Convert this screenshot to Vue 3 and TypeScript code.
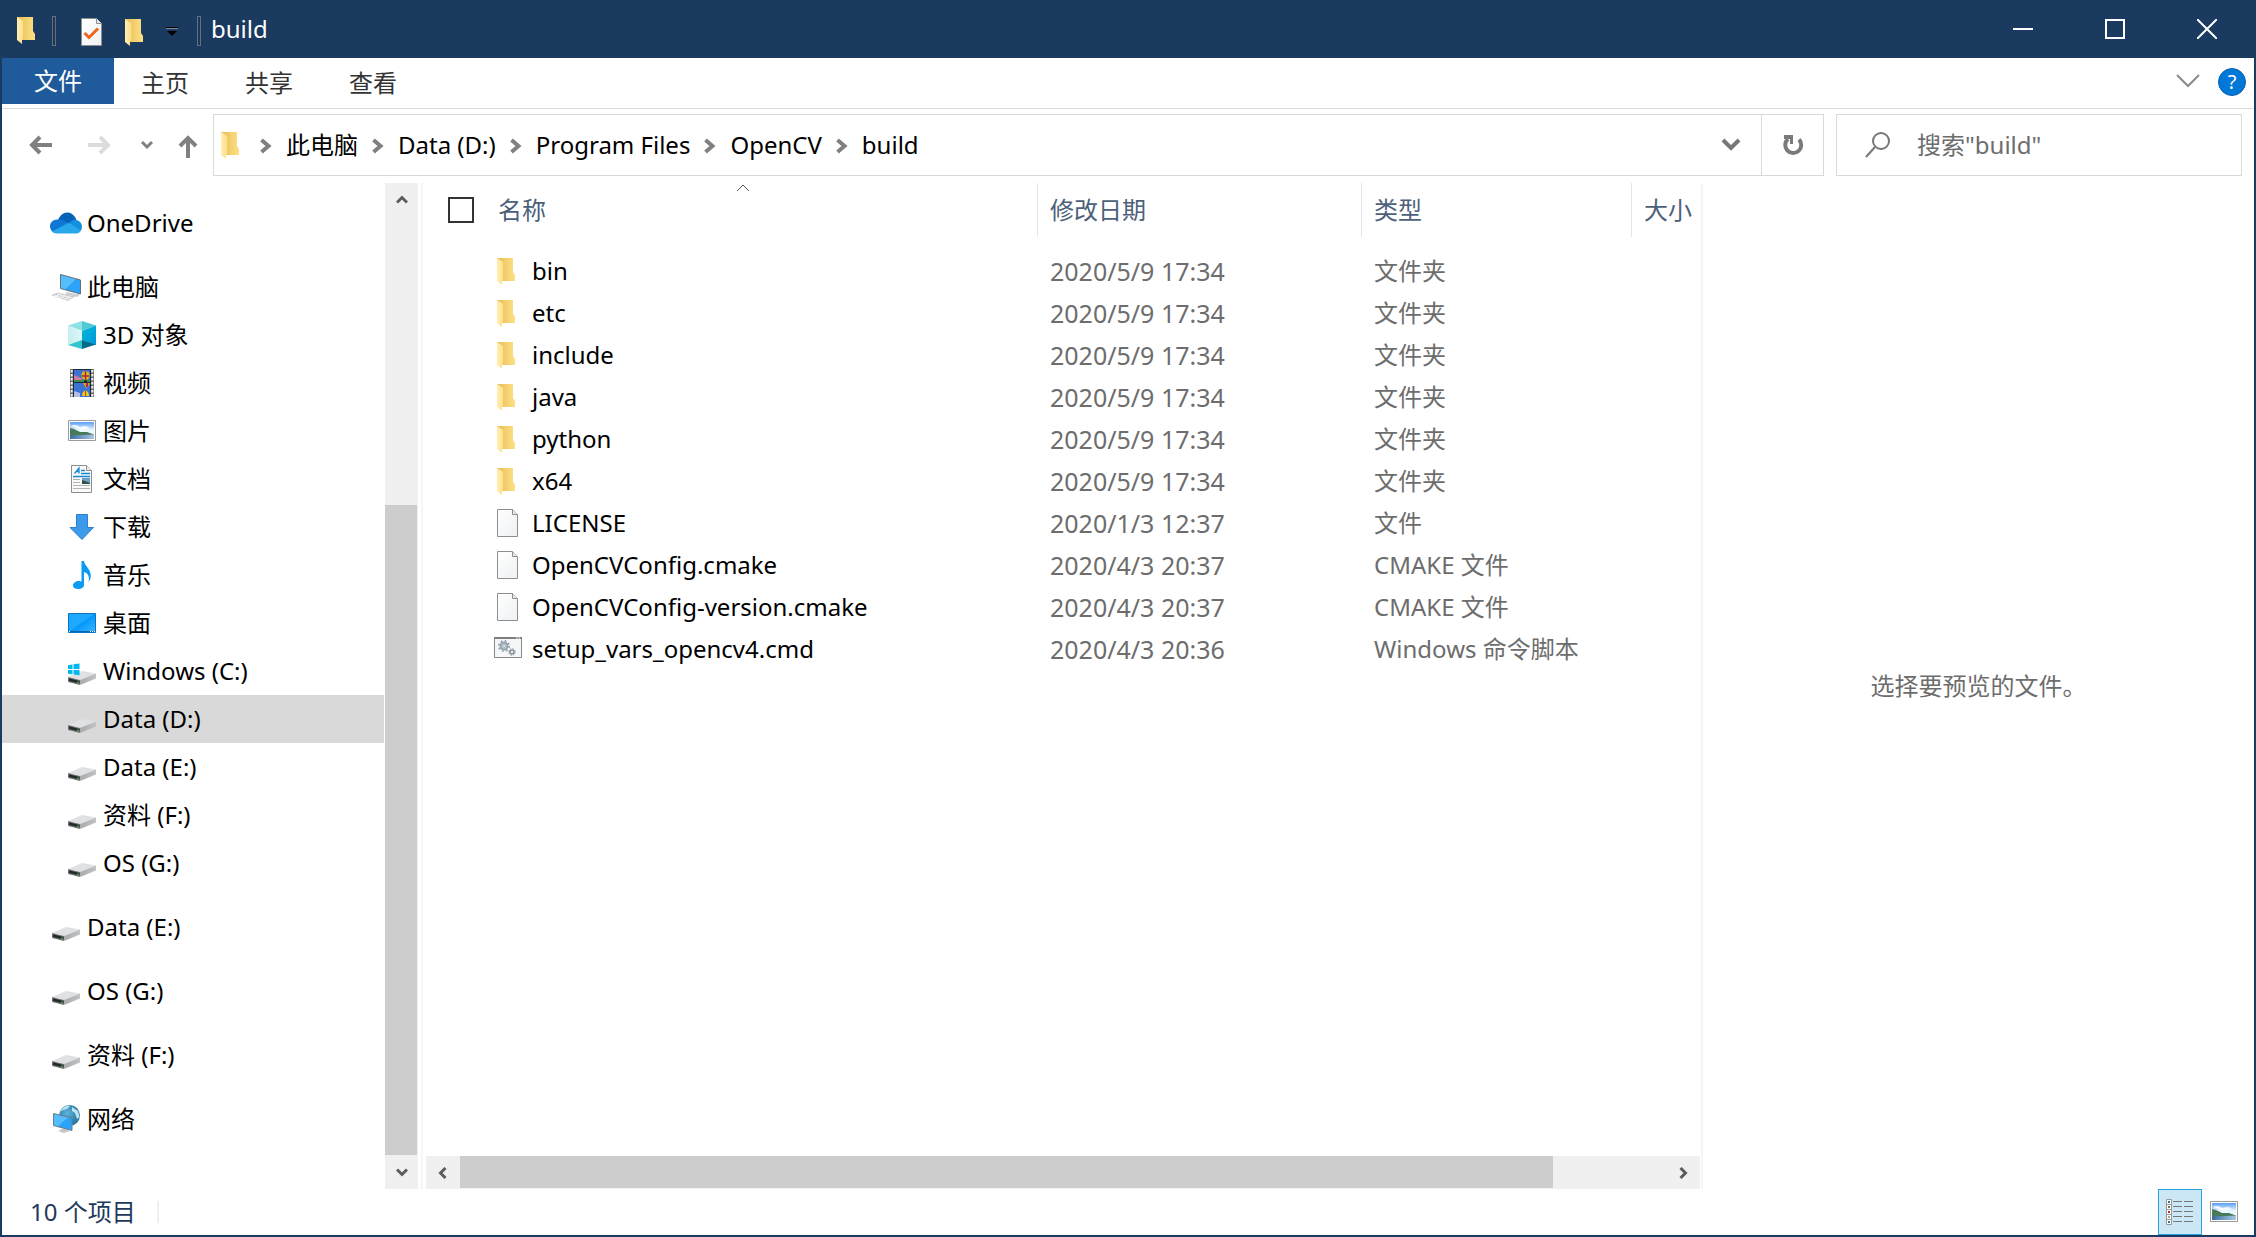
<script setup lang="ts">
import { ref } from 'vue'

interface TreeItem {
  label: string
  icon: string
  level: number
  spaced?: boolean
  selected?: boolean
}

interface FileRow {
  name: string
  icon: string
  date: string
  type: string
}

const tabs = ['主页', '共享', '查看']
const crumbs = ['此电脑', 'Data (D:)', 'Program Files', 'OpenCV', 'build']

const tree: TreeItem[] = [
  { label: 'OneDrive', icon: 'onedrive', level: 0 },
  { label: '此电脑', icon: 'pc', level: 0, spaced: true },
  { label: '3D 对象', icon: 'cube', level: 1 },
  { label: '视频', icon: 'video', level: 1 },
  { label: '图片', icon: 'picture', level: 1 },
  { label: '文档', icon: 'document', level: 1 },
  { label: '下载', icon: 'download', level: 1 },
  { label: '音乐', icon: 'music', level: 1 },
  { label: '桌面', icon: 'desktop', level: 1 },
  { label: 'Windows (C:)', icon: 'windrive', level: 1 },
  { label: 'Data (D:)', icon: 'drive', level: 1, selected: true },
  { label: 'Data (E:)', icon: 'drive', level: 1 },
  { label: '资料 (F:)', icon: 'drive', level: 1 },
  { label: 'OS (G:)', icon: 'drive', level: 1 },
  { label: 'Data (E:)', icon: 'drive', level: 0, spaced: true },
  { label: 'OS (G:)', icon: 'drive', level: 0, spaced: true },
  { label: '资料 (F:)', icon: 'drive', level: 0, spaced: true },
  { label: '网络', icon: 'network', level: 0, spaced: true },
]

const files: FileRow[] = [
  { name: 'bin', icon: 'folder', date: '2020/5/9 17:34', type: '文件夹' },
  { name: 'etc', icon: 'folder', date: '2020/5/9 17:34', type: '文件夹' },
  { name: 'include', icon: 'folder', date: '2020/5/9 17:34', type: '文件夹' },
  { name: 'java', icon: 'folder', date: '2020/5/9 17:34', type: '文件夹' },
  { name: 'python', icon: 'folder', date: '2020/5/9 17:34', type: '文件夹' },
  { name: 'x64', icon: 'folder', date: '2020/5/9 17:34', type: '文件夹' },
  { name: 'LICENSE', icon: 'file', date: '2020/1/3 12:37', type: '文件' },
  { name: 'OpenCVConfig.cmake', icon: 'file', date: '2020/4/3 20:37', type: 'CMAKE 文件' },
  { name: 'OpenCVConfig-version.cmake', icon: 'file', date: '2020/4/3 20:37', type: 'CMAKE 文件' },
  { name: 'setup_vars_opencv4.cmd', icon: 'cmd', date: '2020/4/3 20:36', type: 'Windows 命令脚本' },
]

const treeScroll = { before: 288, size: 650, after: 0 }
const listScroll = { before: 0, size: 1093, after: 113 }

const query = ref('')
const allSelected = ref(false)
</script>

<template>
  <div class="window">
    <svg class="defs" aria-hidden="true">
      <defs>
        <linearGradient id="gFolder"><stop offset="0.2" stop-color="#ecc45f" /><stop offset="1" stop-color="#fee085" /></linearGradient>
        <linearGradient id="gFlap"><stop offset="0" stop-color="#ffeeb5" /><stop offset="1" stop-color="#ffe08a" /></linearGradient>
        <linearGradient id="gScreen" x2="1" y2="1"><stop offset="0.5" stop-color="#55bdfb" /><stop offset="0.51" stop-color="#2aa3f8" /></linearGradient>
        <linearGradient id="gDesk" x2="1" y2="1"><stop offset="0.48" stop-color="#1fa8ff" /><stop offset="0.5" stop-color="#0098fb" /><stop offset="1" stop-color="#41b6ff" /></linearGradient>
        <linearGradient id="gPaper" x2="1" y2="1"><stop offset="0" stop-color="#ffffff" /><stop offset="1" stop-color="#eef0f2" /></linearGradient>
        <linearGradient id="gSky" x2="0" y2="1"><stop offset="0" stop-color="#5b9cf8" /><stop offset="0.6" stop-color="#eaf7fd" /></linearGradient>
        <linearGradient id="gWater" x2="1"><stop offset="0" stop-color="#3b6ca8" /><stop offset="1" stop-color="#a8c8e2" /></linearGradient>
        <linearGradient id="gSide"><stop offset="0" stop-color="#a9aaac" /><stop offset="1" stop-color="#c2c3c6" /></linearGradient>
        <linearGradient id="gCubeL"><stop offset="0" stop-color="#c4efef" /><stop offset="1" stop-color="#dff7f8" /></linearGradient>
        <linearGradient id="gCubeR" x2="1" y2="1"><stop offset="0" stop-color="#00bcd4" /><stop offset="1" stop-color="#0095dd" /></linearGradient>
        <radialGradient id="gGlobe" cx="0.4" cy="0.4"><stop offset="0" stop-color="#5fb4dc" /><stop offset="1" stop-color="#2b7ea8" /></radialGradient>
      </defs>
      <symbol id="folder" viewBox="0 0 28 28">
        <path d="M3 1H19V15L21 18V24H7Z" fill="url(#gFolder)" />
        <path d="M3 1L9 5V22L8 24V28L3 24Z" fill="url(#gFlap)" />
      </symbol>
      <symbol id="file" viewBox="0 0 28 28">
        <path d="M3.500 .5H18.500L23.500 5.500V27.500H3.500Z" fill="url(#gPaper)" stroke="#8c8f91" />
        <path d="M18.500 .5V5.500H23.500" fill="#e9e9e9" stroke="#8c8f91" />
      </symbol>
      <symbol id="cmd" viewBox="0 0 28 28">
        <path d="M.5 2.500H27.500V22.500H.5Z" fill="#f6f7f8" stroke="#85898c" />
        <path d="M0 2H28V4H0Z" fill="#7c8083" />
        <path d="M22 3H23.500M24.500 3H26" stroke="#fff" />
        <circle cx="10" cy="11" r="3.500" fill="#dce5ea" stroke="#93a2ab" stroke-width="2" />
        <circle cx="10" cy="11" r="5.300" fill="none" stroke="#93a2ab" stroke-width="1.500" stroke-dasharray="2 2.160" />
        <circle cx="10" cy="11" r="1.500" fill="#fff" stroke="#93a2ab" />
        <circle cx="18" cy="17" r="2" fill="#e8eef1" stroke="#87939a" stroke-width="1.600" />
        <circle cx="18" cy="17" r="3.300" fill="none" stroke="#87939a" stroke-width="1" stroke-dasharray="1.300 1.290" />
      </symbol>
      <symbol id="onedrive" viewBox="0 0 32 28">
        <path d="M8 11C10 6 14 3 18 3.500C22 4 25 7 26.500 11L18 16L7 12Z" fill="#0364b8" />
        <path d="M7.500 10.500C12 10 15 12 20 15L4 23.500C1.500 22.500 0 20 0 17.500C0 13.500 3 10.500 7.500 10.500Z" fill="#0f78d4" />
        <path d="M19 14C21 11.500 24 10 26.500 11C30 12 32 14.500 32 17.500C32 20 31 21.500 30 22.500Z" fill="#1490df" />
        <path d="M18.500 13.700L30.700 21.500C30 23.500 28.500 24.500 26.500 24.500H6.500C4.500 24.500 3 23.700 2 22.500Z" fill="#28a8ea" />
      </symbol>
      <symbol id="pc" viewBox="0 0 32 28">
        <path d="M17 19L25 21L30 21.500L27 24L15 21Z" fill="#c9ccd0" />
        <path d="M10.500 1.500L30.500 7V21L10.500 15.500Z" fill="url(#gScreen)" stroke="#63707b" />
        <path d="M1 22L8 19.500L25 23.500L18 28Z" fill="#c9cbce" />
        <path d="M4 22.500L20 26.500M7 21L22 25M5 24L11 20.500M10 25.500L15 22M15 26.500L20 23" stroke="#f4f5f6" />
      </symbol>
      <symbol id="cube" viewBox="0 0 28 28">
        <path d="M0 4.500L14 0V10Z" fill="#8fe3e6" />
        <path d="M14 0L28 4.500L14 10Z" fill="#51c9d3" />
        <path d="M0 4.500L14 10V20L0 24Z" fill="url(#gCubeL)" />
        <path d="M14 10L28 4.500V24L14 19Z" fill="url(#gCubeR)" />
        <path d="M0 24L14 19V28Z" fill="#32c5d0" />
        <path d="M14 19L28 23.500L14 28Z" fill="#006b8d" />
      </symbol>
      <symbol id="video" viewBox="0 0 28 28">
        <path d="M2 0H26V28H2Z" fill="#6b6b6b" />
        <path d="M3.700 1V28M24.300 1V28" stroke="#f2f2f2" stroke-width="2" stroke-dasharray="2.500 1.500" />
        <path d="M5 0H23V28H5Z" fill="#202a3a" />
        <path d="M6 1H22V13H6ZM6 14H22V28H6Z" fill="#3c72d2" />
        <path d="M6 6L11 8L14 10V13H6Z" fill="#d07a9e" /><path d="M6 11H22V13H6Z" fill="#3b8b4c" />
        <path d="M6 22L12 24V28H6Z" fill="#b7bfe6" />
        <ellipse cx="17.500" cy="6.500" rx="4" ry="4.500" fill="#e3ba1c" /><path d="M17.500 2V11M14 7H21" stroke="#a8281e" stroke-width="1.500" />
        <path d="M15 14H22L20 18L18 19Z" fill="#d9a027" /><path d="M19 14V18" stroke="#b12c3e" stroke-width="2" />
        <path d="M14 27C14 20 21 20 21 27Z" fill="#f1c61a" /><path d="M17.500 22V27" stroke="#b7442b" />
        <path d="M16 11.500H19V13H16Z" fill="#1c1c1c" />
      </symbol>
      <symbol id="picture" viewBox="0 0 28 28">
        <path d="M.5 3.500H27.500V23.500H.5Z" fill="#fff" stroke="#9b9b9b" />
        <path d="M2 5H26V18H2Z" fill="url(#gSky)" />
        <path d="M3 9C6 7 9 8 12 10L18 9L22 11L14 13Z" fill="#f4fbff" />
        <path d="M2 17H26V22H2Z" fill="url(#gWater)" />
        <path d="M2 11L6 12L12 15L19 15L26 17.500L2 18.500Z" fill="#47795b" />
      </symbol>
      <symbol id="document" viewBox="0 0 28 28">
        <path d="M3.500 .5H18.500L23.500 5.500V27.500H3.500Z" fill="#fafafa" stroke="#8b8e90" />
        <path d="M18.500 .5V5.500H23.500" fill="#eee" stroke="#8b8e90" />
        <path d="M6.500 8.500L11 3V8.500M8 6.500H11.500M13 5.500H17M13 8.500H22M5 11.500H22" stroke="#1489d0" fill="none" stroke-width="1.300" />
        <path d="M5 14.500H12M5 17.500H12M5 20.500H22M5 23.500H22" stroke="#b3b3b3" />
        <path d="M14 13H22V19H14Z" fill="#6c9ec8" /><path d="M14 15L22 18V19H14Z" fill="#2e5045" />
      </symbol>
      <symbol id="download" viewBox="0 0 28 28">
        <path d="M8.500 1.500H19.500V14.500H25.500L14 26.500L2 14.500H8.500Z" fill="#3c9aea" stroke="#2e80cf" />
      </symbol>
      <symbol id="music" viewBox="0 0 28 28">
        <path d="M13.500 0H16C16.500 5 23 8 22.800 15C22.700 18 21.500 20 20.500 21C22 16 20 12 16 11V24C16 26.500 13 28 10 28C7 28 5 26.500 5 24.500C5 22 8 20 11 20C12 20 13 20.300 13.500 20.600Z" fill="#0a9bf2" />
      </symbol>
      <symbol id="desktop" viewBox="0 0 28 28">
        <path d="M.5 4.500H27.500V23.500H.5Z" fill="url(#gDesk)" stroke="#0a74c2" />
        <path d="M1 22.500H27" stroke="#0767ad" /><path d="M1 22.500H3M22 22.500H27" stroke="#fff" stroke-dasharray="1 1" />
      </symbol>
      <symbol id="drive" viewBox="0 0 28 28">
        <path d="M0 20L14 14L28 16.500L12 23Z" fill="#e0e1e4" />
        <path d="M12 23L28 16.500V21.500L12 28Z" fill="url(#gSide)" />
        <path d="M0 20L12 23V28L0 25Z" fill="#777" />
        <path d="M1 21.200L11.500 24V26.500L1 24Z" fill="#272a2a" />
        <path d="M9 24.500L11 25V26.500L9 26Z" fill="#37a446" />
      </symbol>
      <symbol id="windrive" viewBox="0 0 28 28">
        <use href="#drive" width="28" height="28" />
        <path d="M0 8.200L4.500 7.500V12H0ZM5.500 7.300L11.500 6.500V12H5.500ZM0 13H4.500V17.300L0 16.700ZM5.500 13H11.500V18.300L5.500 17.500Z" fill="#00b7f0" />
      </symbol>
      <symbol id="network" viewBox="0 0 28 28">
        <circle cx="17.500" cy="10.500" r="10.500" fill="url(#gGlobe)" />
        <path d="M8 7C10 3 14 0 18 1L15 4L11 5ZM20 2L26 6L27.500 12L25 14L23 8L20 6Z" fill="#bfe2ef" />
        <path d="M6 26L10 24H14L18 26L12 28Z" fill="#c3c8cc" />
        <path d="M1.500 8.500L20 13V25.500L1.500 20.500Z" fill="url(#gScreen)" stroke="#697d8b" />
      </symbol>
      <symbol id="chev" viewBox="0 0 12 16">
        <path d="M1.500 2L8.500 8L1.500 14" fill="none" stroke="#808080" stroke-width="4" />
      </symbol>
      <symbol id="arrow" viewBox="0 0 24 24">
        <path d="M23 12H3M11 4L3 12L11 20" fill="none" stroke="currentColor" stroke-width="4" />
      </symbol>
      <symbol id="scroll" viewBox="0 0 12 12">
        <path d="M1 8.500L6 3.500L11 8.500" fill="none" stroke="#5c5c5c" stroke-width="3" />
      </symbol>
    </svg>

    <header class="titlebar">
      <svg class="icon"><use href="#folder" /></svg>
      <i class="bar"></i>
      <div class="quick">
        <button aria-label="属性">
          <svg class="icon" viewBox="0 0 28 28">
            <use href="#file" width="28" height="28" />
            <path d="M6.500 15L11 19.500L20 10.500" fill="none" stroke="#f1621b" stroke-width="3" />
          </svg>
        </button>
        <button aria-label="新建文件夹"><svg class="icon"><use href="#folder" /></svg></button>
        <button class="more" aria-label="自定义快速访问工具栏">
          <svg width="12" height="12" viewBox="0 0 12 12"><path d="M0 1.500H12" stroke="#000" /><path d="M0 2.500H12" stroke="#7d8fa3" /><path d="M1 5H11L6 10Z" fill="#000" /></svg>
        </button>
      </div>
      <i class="bar"></i>
      <h1>build</h1>
      <div class="winbtns">
        <button aria-label="最小化"><svg width="20" height="20"><path d="M0 10H20" stroke="#fff" stroke-width="2" /></svg></button>
        <button aria-label="最大化"><svg width="20" height="20"><path d="M1 1H19V19H1Z" fill="none" stroke="#fff" stroke-width="2" /></svg></button>
        <button aria-label="关闭"><svg width="20" height="20"><path d="M0 0L20 20M20 0L0 20" stroke="#fff" stroke-width="2" /></svg></button>
      </div>
    </header>

    <div class="body">
      <nav class="ribbon">
        <button class="filetab">文件</button>
        <button v-for="t in tabs" :key="t" class="tab">{{ t }}</button>
        <button class="expand" aria-label="展开功能区"><svg width="24" height="14"><path d="M1 1L12 12L23 1" fill="none" stroke="#8a8a8a" stroke-width="2" /></svg></button>
        <button class="help" aria-label="帮助">?</button>
      </nav>

      <div class="toolbar">
        <div class="nav">
          <button aria-label="后退"><svg width="24" height="24"><use href="#arrow" /></svg></button>
          <button class="off" aria-label="前进"><svg width="24" height="24" class="flip"><use href="#arrow" /></svg></button>
          <button class="recent" aria-label="最近浏览的位置"><svg width="14" height="10"><path d="M2 2L7 7L12 2" fill="none" stroke="#808080" stroke-width="3" /></svg></button>
          <button class="up" aria-label="上移"><svg width="20" height="24"><path d="M10 23V3M2 11L10 3L18 11" fill="none" stroke="#808080" stroke-width="4" /></svg></button>
        </div>
        <div class="address">
          <svg class="icon"><use href="#folder" /></svg>
          <template v-for="c in crumbs" :key="c">
            <svg class="chev"><use href="#chev" /></svg>
            <a href="#">{{ c }}</a>
          </template>
          <button class="drop" aria-label="历史记录"><svg width="20" height="14"><path d="M2 2L10 10L18 2" fill="none" stroke="#777" stroke-width="4" /></svg></button>
          <button class="refresh" aria-label="刷新">
            <svg width="22" height="24" viewBox="0 0 22 24"><path d="M17 6.500A8 8 0 1 1 6 6" fill="none" stroke="#7a7a7a" stroke-width="4" /><path d="M2 2H11V11H8V6H2Z" fill="#7a7a7a" /></svg>
          </button>
        </div>
        <label class="search">
          <svg width="26" height="26"><circle cx="16" cy="9" r="8" fill="none" stroke="#777" stroke-width="2" /><path d="M10 15L1 25" stroke="#777" stroke-width="2" /></svg>
          <input v-model="query" type="text" placeholder='搜索"build"' aria-label="搜索" />
        </label>
      </div>

      <main class="panes">
        <aside class="tree">
          <ul>
            <li v-for="(n, i) in tree" :key="i" :class="{ spaced: n.spaced }">
              <a href="#" :class="{ selected: n.selected, child: n.level === 1 }">
                <svg class="slot"><use :href="'#' + n.icon" /></svg>
                <span>{{ n.label }}</span>
              </a>
            </li>
          </ul>
          <div class="vscroll">
            <button aria-label="向上滚动"><svg width="12" height="12"><use href="#scroll" /></svg></button>
            <i :style="{ flexGrow: treeScroll.before }"></i>
            <i class="thumb" :style="{ flexGrow: treeScroll.size }"></i>
            <i :style="{ flexGrow: treeScroll.after }"></i>
            <button aria-label="向下滚动"><svg width="12" height="12" class="down"><use href="#scroll" /></svg></button>
          </div>
        </aside>

        <section class="list">
          <div class="listbody">
            <table>
              <colgroup><col class="cname" /><col class="cdate" /><col class="ctype" /><col /></colgroup>
              <thead>
                <tr>
                  <th>
                    <div class="namehead">
                      <input v-model="allSelected" type="checkbox" aria-label="全选" />
                      <span>名称</span>
                      <svg class="sort" width="14" height="8"><path d="M1 7L7 1L13 7" fill="none" stroke="#555" /></svg>
                    </div>
                  </th>
                  <th>修改日期</th>
                  <th>类型</th>
                  <th>大小</th>
                </tr>
              </thead>
              <tbody>
                <tr v-for="f in files" :key="f.name">
                  <td>
                    <div class="name"><svg class="icon"><use :href="'#' + f.icon" /></svg><span>{{ f.name }}</span></div>
                  </td>
                  <td class="date">{{ f.date }}</td>
                  <td>{{ f.type }}</td>
                  <td></td>
                </tr>
              </tbody>
            </table>
          </div>
          <div class="hscroll">
            <button aria-label="向左滚动"><svg width="12" height="12" class="left"><use href="#scroll" /></svg></button>
            <i :style="{ flexGrow: listScroll.before }"></i>
            <i class="thumb" :style="{ flexGrow: listScroll.size }"></i>
            <i :style="{ flexGrow: listScroll.after }"></i>
            <button aria-label="向右滚动"><svg width="12" height="12" class="right"><use href="#scroll" /></svg></button>
          </div>
        </section>

        <section class="preview">选择要预览的文件。</section>
      </main>

      <footer class="status">
        <span>10 个项目</span>
        <i></i>
        <button class="view active" aria-label="详细信息">
          <svg width="28" height="28" viewBox="0 0 28 28">
            <path d="M.5 1.500H5.500V26.500H.5ZM.5 6.500H5.500M.5 11.500H5.500M.5 16.500H5.500M.5 21.500H5.500" fill="#fff" stroke="#999" />
            <path d="M7 3.500H16M18 3.500H27M7 8.500H16M18 8.500H27M7 13.500H16M18 13.500H27M7 18.500H16M18 18.500H27M7 23.500H16M18 23.500H27" stroke="#777" />
            <path d="M2 3H4V5H2ZM2 23H4V25H2Z" fill="#2f7688" /><path d="M2 8H4V10H2Z" fill="#7a7a4a" /><path d="M2 13H4V15H2Z" fill="#c22a1c" /><path d="M2 18H4V20H2Z" fill="#a0a890" />
          </svg>
        </button>
        <button class="view" aria-label="大缩略图"><svg class="icon"><use href="#picture" /></svg></button>
      </footer>
    </div>
  </div>
</template>

<style>
body {
  background: #1a3a5f;
}
</style>

<style scoped>
.window {
  display: flex;
  flex-direction: column;
  min-height: 100vh;
  background: #1a3a5f;
  color: #000;
  font: 24px/32px "Noto Sans", "Noto Sans CJK SC", sans-serif;
}
.window * {
  box-sizing: border-box;
}
.defs {
  position: absolute;
  width: 0;
  height: 0;
}
button {
  display: flex;
  align-items: center;
  justify-content: center;
  padding: 0;
  border: 0;
  background: none;
  color: inherit;
  font: inherit;
}
a {
  color: inherit;
  text-decoration: none;
}
svg {
  display: block;
  flex: none;
}
.icon {
  width: 28px;
  height: 28px;
}
.titlebar {
  display: flex;
  align-items: center;
  height: 58px;
  padding-left: 14px;
  color: #fff;
}
.titlebar > .icon {
  margin-top: 2px;
}
.bar {
  width: 4px;
  height: 30px;
  margin: 4px 10px 0;
  border: 1px solid #5d7188;
  background: #24364c;
}
.quick {
  display: flex;
  padding: 6px 9px 0 12px;
}
.quick button {
  width: 44px;
  justify-content: flex-start;
}
.quick .more {
  width: 12px;
}
h1 {
  flex: 1;
  margin: 0;
  font-size: 24px;
  font-weight: 400;
}
.winbtns {
  display: flex;
  align-self: stretch;
  padding-right: 3px;
}
.winbtns button {
  width: 92px;
}
.body {
  display: flex;
  flex: 1;
  flex-direction: column;
  margin: 0 2px 2px;
  background: #fff;
}
.ribbon {
  display: flex;
  align-items: center;
  height: 51px;
  padding-bottom: 4px;
  border-bottom: 1px solid #dadbdc;
  color: #333;
}
.ribbon .filetab {
  width: 112px;
  height: 46px;
  background: #1f5a9a;
  color: #fff;
}
.tab {
  width: 104px;
  height: 46px;
  padding: 4px 2px 0 0;
}
.expand {
  margin-left: auto;
  width: 40px;
}
.help {
  width: 28px;
  height: 28px;
  margin: 2px 8px 0 10px;
  border: 1px solid #0b5fae;
  border-radius: 50%;
  background: #0078d7;
  color: #fff;
  font-size: 20px;
}
.toolbar {
  display: flex;
  height: 62px;
  margin: 5px 12px 7px 0;
}
.nav {
  display: flex;
  align-items: center;
  width: 211px;
  padding-left: 27px;
  color: #808080;
}
.nav button {
  width: 24px;
  margin-right: 34px;
}
.nav .off {
  margin-right: 29px;
  color: #dcdcdc;
}
.nav .recent {
  width: 14px;
  margin-right: 24px;
}
.nav .up {
  width: 20px;
  margin: 4px 0 0;
}
.flip {
  transform: scaleX(-1);
}
.address {
  display: flex;
  flex: 1;
  align-items: center;
  padding-left: 4px;
  border: 1px solid #d9d9d9;
}
.chev {
  width: 12px;
  height: 16px;
  margin: 2px 14px 0 14px;
}
.drop {
  width: 60px;
  margin-left: auto;
}
.refresh {
  align-self: stretch;
  width: 62px;
  border-left: 1px solid #d9d9d9;
}
.search {
  display: flex;
  align-items: center;
  width: 406px;
  margin-left: 12px;
  padding-left: 28px;
  border: 1px solid #d9d9d9;
}
.search input {
  flex: 1;
  min-width: 0;
  margin-left: 26px;
  padding: 0;
  border: 0;
  outline: 0;
  color: #000;
  font: inherit;
}
.search input::placeholder {
  color: #6d6d6d;
  opacity: 1;
}
.panes {
  display: flex;
  flex: 1;
}
.tree {
  display: flex;
  width: 421px;
  padding-right: 3px;
  border-right: 2px solid #f5f5f5;
}
.tree ul {
  flex: 1;
  margin: 0 1px 0 0;
  padding: 16px 0 0;
  list-style: none;
}
.tree .spaced {
  margin-top: 16px;
}
.tree a {
  display: flex;
  align-items: center;
  gap: 5px;
  height: 48px;
  padding-left: 48px;
}
.tree .child {
  padding-left: 64px;
}
.tree .selected {
  background: #d9d9d9;
}
.slot {
  width: 32px;
  height: 28px;
}
.vscroll {
  display: flex;
  flex-direction: column;
  width: 33px;
  background: #f0f0f0;
}
.vscroll i,
.hscroll i {
  flex-basis: 0;
}
.vscroll button {
  height: 34px;
}
.vscroll .thumb {
  width: 32px;
}
.thumb {
  background: #cdcdcd;
}
.down {
  transform: rotate(180deg);
}
.left {
  transform: rotate(-90deg);
}
.right {
  transform: rotate(90deg);
}
.list {
  display: flex;
  flex: 1;
  flex-direction: column;
  min-width: 0;
  padding: 0 1px 0 3px;
  border-right: 2px solid #f5f5f5;
}
.listbody {
  flex: 1;
}
table {
  width: 100%;
  border-collapse: separate;
  border-spacing: 0;
  table-layout: fixed;
}
.cname {
  width: 612px;
}
.cdate {
  width: 324px;
}
.ctype {
  width: 270px;
}
th {
  height: 54px;
  padding: 0 0 0 12px;
  border-right: 1px solid #e5e5e5;
  color: #4c607a;
  font-weight: 400;
  text-align: left;
  white-space: nowrap;
}
th:first-child {
  padding-left: 22px;
}
th:last-child {
  border-right: 0;
}
.namehead {
  position: relative;
  display: flex;
  align-items: center;
  height: 54px;
}
.namehead input {
  appearance: none;
  width: 26px;
  height: 26px;
  margin: 0 24px 0 0;
  border: 2px solid #333;
  background: #fff;
}
.sort {
  position: absolute;
  top: 1px;
  left: calc(50% - 7px);
}
tbody::before {
  content: "";
  display: block;
  height: 13px;
}
td {
  height: 42px;
  padding: 0 0 0 12px;
  color: #6d6d6d;
  white-space: nowrap;
}
td:first-child {
  padding-left: 68px;
  color: #000;
}
.name {
  display: flex;
  align-items: center;
  gap: 10px;
}
.date {
  font-size: 25px;
}
.hscroll {
  display: flex;
  height: 33px;
  background: #f0f0f0;
}
.hscroll button {
  width: 34px;
}
.hscroll .thumb {
  height: 32px;
}
.preview {
  display: flex;
  align-items: center;
  justify-content: center;
  width: 551px;
  color: #6d6d6d;
}
.status {
  display: flex;
  align-items: center;
  height: 46px;
  padding: 0 8px 0 28px;
  color: #1e395b;
}
.status i {
  width: 2px;
  height: 22px;
  margin: 0 auto 0 21px;
  background: #f0f0f0;
}
.view {
  width: 44px;
  height: 46px;
}
.view.active {
  border: 1px solid #26a0da;
  background: #cce8f6;
}
</style>
